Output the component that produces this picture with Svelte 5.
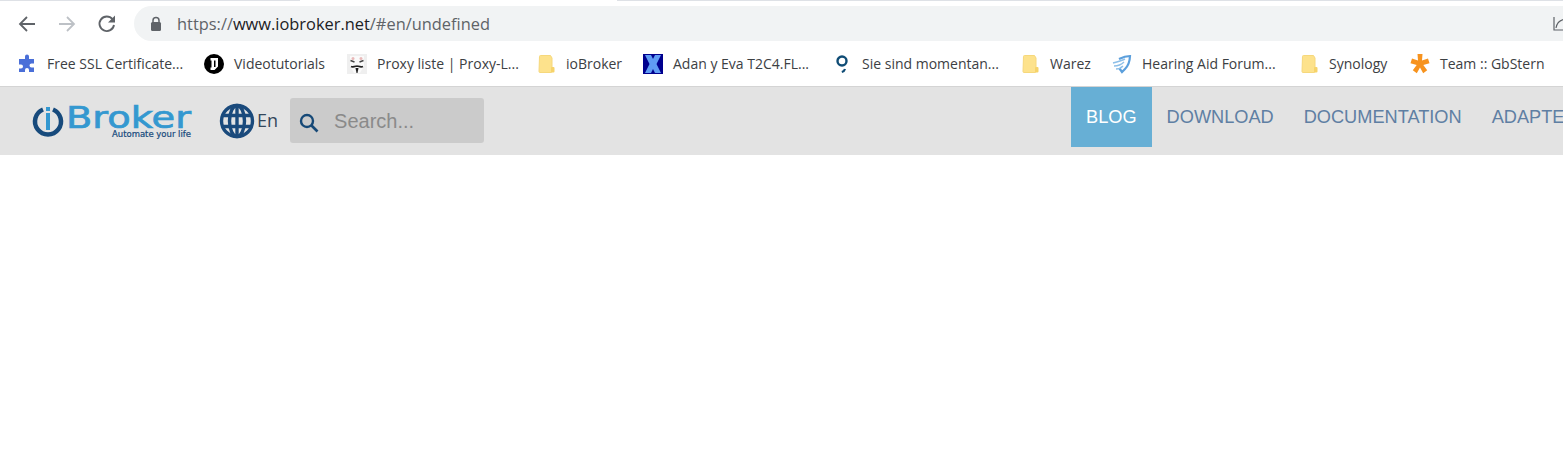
<script>
  const bookmarks = [
    { icon: 'puzzle', label: 'Free SSL Certificate...', w: 137 },
    { icon: 'video', label: 'Videotutorials', w: 93 },
    { icon: 'mask', label: 'Proxy liste | Proxy-L...', w: 139 },
    { icon: 'folder', label: 'ioBroker', w: 57 },
    { icon: 'x', label: 'Adan y Eva T2C4.FL...', w: 139 },
    { icon: 'nine', label: 'Sie sind momentan...', w: 138 },
    { icon: 'folder', label: 'Warez', w: 42 },
    { icon: 'wind', label: 'Hearing Aid Forum...', w: 137 },
    { icon: 'folder', label: 'Synology', w: 61 },
    { icon: 'star', label: 'Team :: GbStern', w: 103 }
  ];

  const links = ['Blog', 'Download', 'Documentation', 'Adapter'];
</script>

{#snippet bookmarkIcon(name)}
  <svg class="bm-icon" width="20" height="20" viewBox="0 0 20 20">
    {#if name === 'puzzle'}
      <path fill="#4a6fd8" d="M8 2.500a2 2 0 0 1 4 0V5h5v4.500h-2.500a2 2 0 0 0 0 4H17V18h-5v-2a2 2 0 0 0-4 0v2H2v-3.500h2a2 2 0 0 0 0-4H2V5h6z" />
    {:else if name === 'video'}
      <circle cx="10" cy="10" r="10" fill="#000" />
      <path fill="#fff" d="M6.500 4H14v8.500L10.500 16h-4v-2.500h1V6.500h-1zM10 6.500v6.500h1.500V6.500z" />
    {:else if name === 'mask'}
      <rect width="20" height="20" fill="#efefef" />
      <path fill="#fafafa" d="M3 2h14v10l-4 7H7l-4-7z" />
      <path fill="none" stroke="#444" stroke-width="1.400" d="M3.500 6.500l4 1.500M16.500 6.500l-4 1.500" />
      <path fill="none" stroke="#222" stroke-width="1.600" d="M4 12.500c2 1 4 0 6-.5 2 .5 4 1.500 6 .5" />
      <path fill="#222" d="M8.500 14h3l-1 5h-1z" />
      <circle cx="6" cy="4.500" r="1.500" fill="#e9b9b9" />
      <circle cx="14" cy="4.500" r="1.500" fill="#e9b9b9" />
    {:else if name === 'folder'}
      <path fill="#fde28c" stroke="#f6d87c" d="M3.500 2.500a1 1 0 0 1 1-1h10l1.500 2.500V17.500a1 1 0 0 1-1 1h-11a1 1 0 0 1-1-1z" />
      <rect x="15" y="13" width="3.500" height="5.500" rx="1" fill="#f6d36a" />
    {:else if name === 'x'}
      <rect width="20" height="20" fill="#00008e" />
      <path fill="#5f9cf4" d="M2 1h6l2 4 2-4h6l-4.500 9 4.500 9h-6l-2-4-2 4H2l4.500-9z" />
    {:else if name === 'nine'}
      <circle cx="10" cy="7" r="4.500" fill="none" stroke="#0f4c75" stroke-width="2.400" />
      <path fill="none" stroke="#0f4c75" stroke-width="2.200" d="M13 15c-.5 1.700-1.500 2.600-3.200 3" />
    {:else if name === 'wind'}
      <path fill="none" stroke="#5b9fdc" stroke-width="2.200" d="M7 5c4-2 7-3 11-3-.2 5-2 10-5 13l-3 3-2.500-3.500" />
      <path fill="none" stroke="#8dbfe8" stroke-width="1.500" d="M1 9c4-1 8-2 12-4M2 12c3 0 7-1 10-4M4 15c2 0 5-1 7-3" />
    {:else if name === 'star'}
      <path fill="#f7931e" d="M7.500 0h5l-.5 6.500 6-2 1.500 4.700-6.200 1.800 3.900 5.300-4 2.900L10 13.500l-3.200 5.700-4-2.900 3.900-5.300L.5 9.200 2 4.500l6 2z" />
    {/if}
  </svg>
{/snippet}

<div class="tabstrip">
  <span class="strip-a"></span>
  <span class="strip-b"></span>
  <span class="strip-c"></span>
</div>

<div class="toolbar">
  <svg class="tool" width="20" height="20" viewBox="0 0 20 20">
    <path fill="none" stroke="#5f6368" stroke-width="1.800" d="M18 10H3M10 3l-7 7 7 7" />
  </svg>
  <svg class="tool" width="20" height="20" viewBox="0 0 20 20">
    <path fill="none" stroke="#bdc1c6" stroke-width="1.800" d="M2 10h15M10 3l7 7-7 7" />
  </svg>
  <svg class="tool" width="20" height="20" viewBox="0 0 20 20">
    <path fill="none" stroke="#5f6368" stroke-width="1.900" d="M15.500 5.200A7.300 7.300 0 1 0 17 11" />
    <path fill="#5f6368" d="M18 1.500V8.500H11z" />
  </svg>

  <div class="omnibox">
    <svg class="lock" width="12" height="16" viewBox="0 0 12 16">
      <path fill="none" stroke="#5f6368" stroke-width="1.500" d="M3 7V4.500a3 3 0 0 1 6 0V7" />
      <rect x="1" y="6" width="10" height="9" rx="1.500" fill="#5f6368" />
    </svg>
    <span class="url">https://<b>www.iobroker.net</b>/#en/undefined</span>
    <svg class="ext" width="22" height="18" viewBox="0 0 22 18">
      <path fill="none" stroke="#5f6368" stroke-width="1.200" d="M1 2v13h20M3 13c1-6 5-9 12-9M11 7l5-3v8" />
    </svg>
  </div>
</div>

<div class="bookmarks">
  {#each bookmarks as b}
    <div class="bookmark">
      {@render bookmarkIcon(b.icon)}
      <span style="width: {b.w}px">{b.label}</span>
    </div>
  {/each}
</div>

<header class="site-nav">
  <a class="logo" href="/" aria-label="ioBroker">
    <svg width="162" height="40" viewBox="0 0 162 40">
      <path fill="none" stroke="#174a7c" stroke-width="4.500" d="M12 7.500A13 13 0 1 0 22 7.500" />
      <rect x="15" y="5" width="4" height="4" fill="#3498d0" />
      <rect x="15" y="11" width="4" height="17" fill="#3498d0" />
      <text x="35" y="26" class="logo-name" textLength="125" lengthAdjust="spacingAndGlyphs">Broker</text>
      <text x="81" y="35" class="logo-tag" textLength="79" lengthAdjust="spacingAndGlyphs">Automate your life</text>
    </svg>
  </a>

  <div class="lang">
    <svg width="36" height="36" viewBox="0 0 36 36">
      <g fill="none" stroke="#1a4a7c" stroke-width="3.400">
        <circle cx="18" cy="18" r="15.500" />
        <ellipse cx="18" cy="18" rx="7.500" ry="15.500" />
        <path d="M3 12.500h30M3 23.500h30M18 2v32" />
      </g>
    </svg>
    <span>En</span>
  </div>

  <label class="search">
    <svg width="20" height="20" viewBox="0 0 20 20">
      <circle cx="8" cy="8" r="6" fill="none" stroke="#164977" stroke-width="2.400" />
      <path stroke="#164977" stroke-width="2.600" d="M12.500 12.500l6 6" />
    </svg>
    <input type="text" placeholder="Search..." />
  </label>

  <nav>
    {#each links as link, i}
      <a href="/" class:active={i === 0}>{link}</a>
    {/each}
  </nav>
</header>

<style>
  :global(body) {
    margin: 0;
    background: #fff;
    overflow: hidden;
  }

  .tabstrip {
    display: flex;
    height: 1px;
  }

  .strip-a {
    width: 300px;
    background: #dee1e6;
  }

  .strip-b {
    width: 317px;
    background: #fff;
  }

  .strip-c {
    flex: 1;
    background: #dee1e6;
  }

  .toolbar {
    display: flex;
    align-items: center;
    height: 35px;
    padding: 5px 0 0 17px;
  }

  .tool {
    flex: none;
    margin-right: 20px;
  }

  .omnibox {
    flex: 1;
    display: flex;
    align-items: center;
    height: 35px;
    margin-left: -3px;
    padding-left: 16px;
    background: #f1f3f4;
    border-radius: 18px 0 0 18px;
    overflow: hidden;
  }

  .lock {
    flex: none;
  }

  .url {
    margin-left: 15px;
    font-family: "Open Sans", sans-serif;
    font-size: 16.4px;
    color: #5f6368;
    white-space: nowrap;
  }

  .url b {
    font-weight: 400;
    color: #202124;
  }

  .ext {
    flex: none;
    margin-left: auto;
    margin-right: -12px;
  }

  .bookmarks {
    display: flex;
    align-items: center;
    gap: 20px;
    height: 45px;
    padding-left: 17px;
    font-family: "Open Sans", sans-serif;
    font-size: 14px;
    color: #3c4043;
    white-space: nowrap;
  }

  .bookmark {
    display: flex;
    align-items: center;
    gap: 10px;
  }

  .bm-icon {
    flex: none;
  }

  .site-nav {
    display: flex;
    height: 68px;
    border-top: 1px solid #d4d4d4;
    background: #e3e3e3;
    white-space: nowrap;
  }

  .logo {
    flex: none;
    margin: 15px 0 0 31px;
    height: 40px;
  }

  .logo svg {
    display: block;
    overflow: visible;
  }

  .logo-name {
    font-family: "DejaVu Sans", sans-serif;
    font-size: 30px;
    fill: #3498d0;
    stroke: #3498d0;
    stroke-width: 0.7px;
  }

  .logo-tag {
    font-family: "DejaVu Sans", sans-serif;
    font-size: 8px;
    fill: #174a7c;
    stroke: #174a7c;
    stroke-width: 0.2px;
  }

  .lang {
    flex: none;
    display: flex;
    align-items: center;
    align-self: flex-start;
    gap: 2px;
    margin: 16px 0 0 26px;
    font-family: "Open Sans", sans-serif;
    font-size: 18px;
    color: #33475b;
  }

  .lang span {
    margin-top: -2px;
  }

  .search {
    flex: none;
    display: flex;
    align-items: center;
    align-self: flex-start;
    box-sizing: border-box;
    width: 194px;
    height: 45px;
    margin: 11px 0 0 12px;
    padding: 4px 0 0 9px;
    background: #cbcbcb;
    border-radius: 3px;
  }

  .search input {
    width: 140px;
    margin: -2px 0 0 15px;
    padding: 0;
    border: 0;
    outline: 0;
    background: none;
    font-family: "Liberation Sans", sans-serif;
    font-size: 20px;
  }

  .search input::placeholder {
    color: #8a8a8a;
    opacity: 1;
  }

  nav {
    flex: none;
    display: flex;
    align-self: flex-start;
    margin-left: 587px;
  }

  nav a {
    display: block;
    height: 60px;
    padding: 0 15px;
    line-height: 60px;
    font-family: "Liberation Sans", sans-serif;
    font-size: 18.2px;
    text-transform: uppercase;
    text-decoration: none;
    color: #5f7fa3;
  }

  nav a.active {
    background: #67afd5;
    color: #fff;
  }
</style>
